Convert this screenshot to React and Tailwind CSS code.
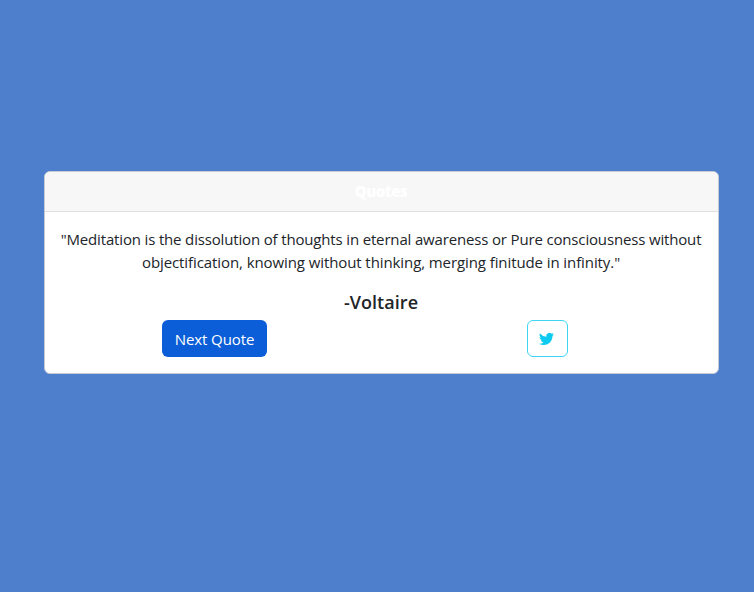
import { BsTwitter } from "react-icons/bs";

export default function App() {
  return (
    <div className="h-screen overflow-hidden bg-[#4d7fcc] pt-[171px] pl-11 font-['Open_Sans','Noto_Sans',sans-serif] text-[#212529]">
      <div className="flex h-[203px] w-[675px] flex-col rounded-md border border-[#c6cbd4] bg-white text-center">
        <div className="h-10 rounded-t-[5px] border-b border-[#dfdfdf] bg-[#f7f7f7] pt-[7px] pr-px text-[15px] leading-6 font-extrabold tracking-[-0.5px] text-white">
          Quotes
        </div>
        <div className="pt-4">
          <p className="pr-px text-[15px] leading-[23px] whitespace-nowrap">
            <span className="block tracking-[-0.16px]">"Meditation is the dissolution of thoughts in eternal awareness or Pure consciousness without</span>
            <span className="block tracking-[-0.09px]">objectification, knowing without thinking, merging finitude in infinity."</span>
          </p>
          <h5 className="mt-4 pr-px text-[18px] leading-6 font-semibold tracking-[0.05px]">-Voltaire</h5>
          <div className="mt-1.5 flex">
            <button className="ml-[117px] h-[37px] w-[105px] rounded-md bg-[#0b5ed7] pt-px text-[15px] tracking-[-0.1px] whitespace-nowrap text-white">
              Next Quote
            </button>
            <button className="ml-[260px] flex h-[37px] w-[41px] items-center justify-center rounded-md border border-[#3dd5f3] pr-0.5 text-[#0dcaf0]" aria-label="Tweet">
              <BsTwitter size={15} />
            </button>
          </div>
        </div>
      </div>
    </div>
  );
}
